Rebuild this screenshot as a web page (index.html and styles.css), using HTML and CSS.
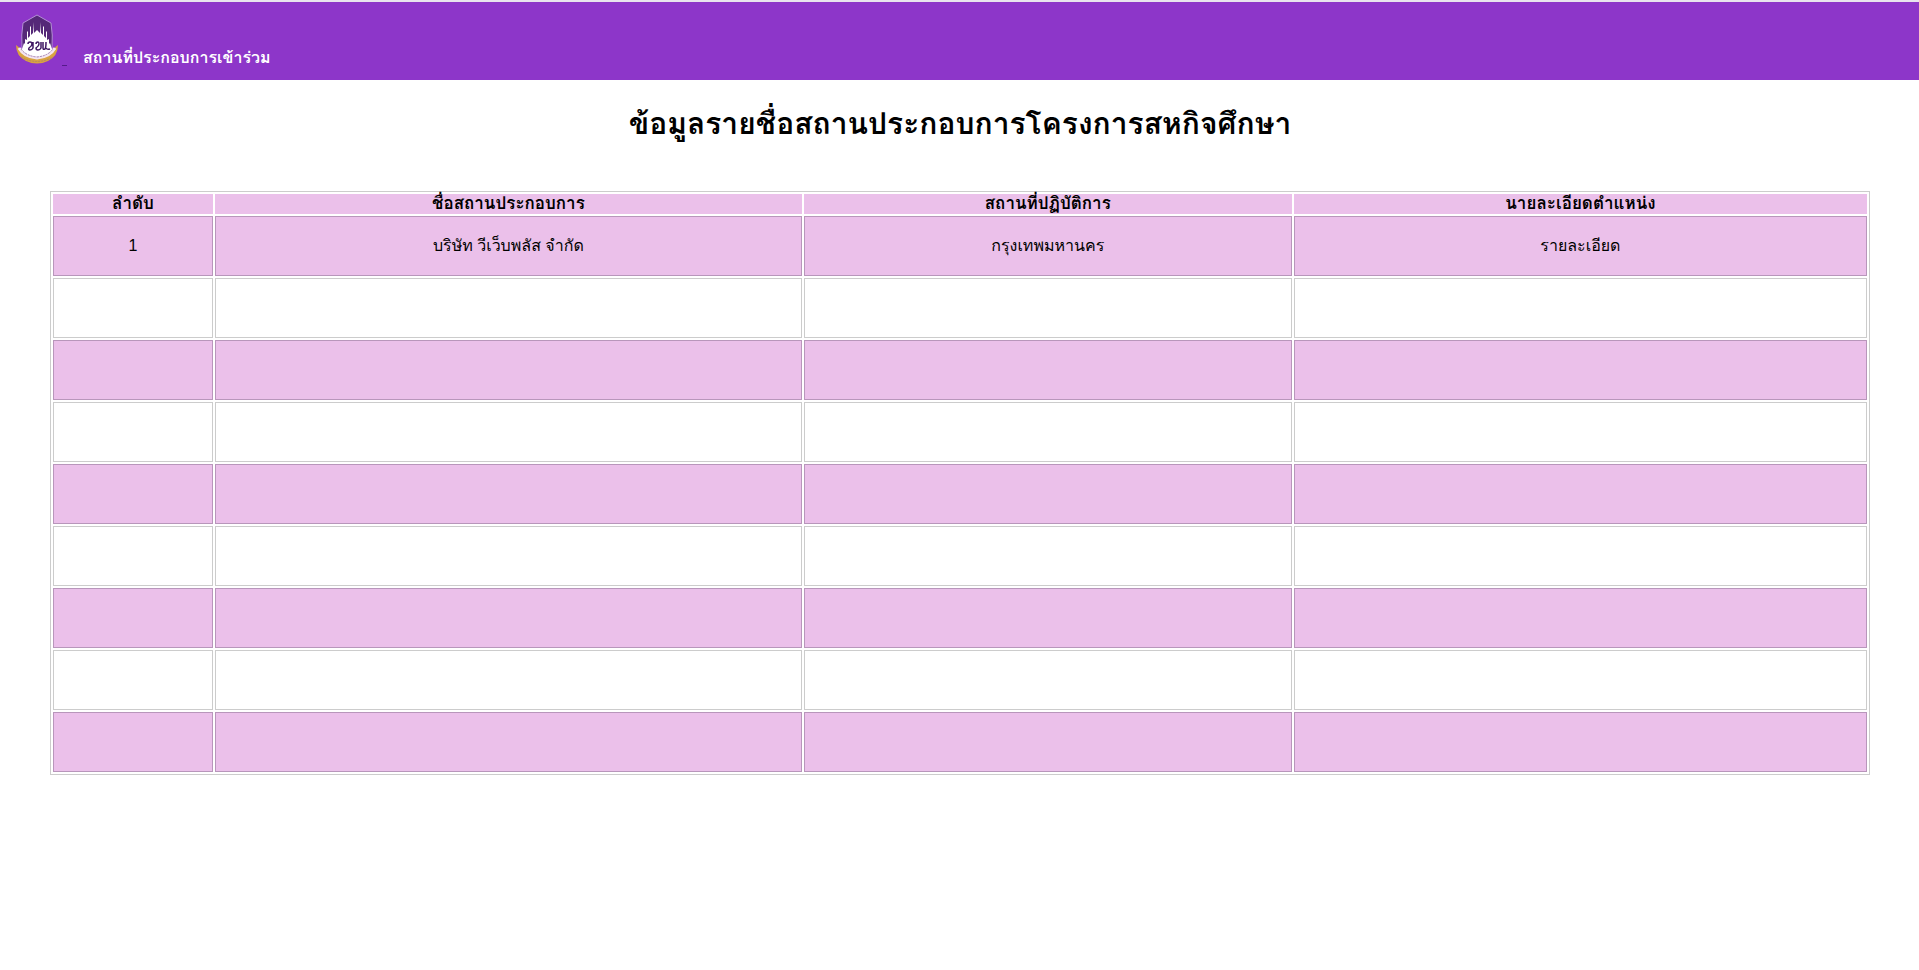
FILE: index.html
```html
<!DOCTYPE html>
<html lang="th">
<head>
<meta charset="utf-8">
<title>สถานที่ประกอบการเข้าร่วม</title>
<link rel="stylesheet" href="styles.css">
</head>
<body>
<header class="topbar">
  <a class="brand" href="#" aria-label="หน้าหลัก">
    <svg class="logo" viewBox="0 0 42 50" aria-hidden="true">
      <path d="M21 1 35 9Q37 20 36 35H6Q5 20 7 9Z" fill="#552878" stroke="#b48fd6"/>
      <path d="M6 35 8 29 9 30V25L11 26V18L12 17V24L14 22V13L15 12V21L17 19V8L18 19 21 16 24 19 25 8V19L27 21V12L28 13V22L30 24V17L31 18V26L33 25V30L34 29 36 35 39 37 31 45 21 47 11 45 3 37Z" fill="#fff"/>
      <path d="M0 31 5 35Q9 43 21 44 33 43 37 35L42 31Q42 42 32 47 21 52 10 47 0 42 0 31Z" fill="#d9a441"/>
      <path d="M3 34Q8 43 21 44 34 43 39 34" fill="none" stroke="#f5e6f0" stroke-width="3"/>
      <path d="M5 35Q10 42 21 43 32 42 37 35" fill="none" stroke="#a283b5" stroke-dasharray="2 1"/>
      <path d="M5 43Q21 52 37 43" fill="none" stroke="#b58a62" stroke-dasharray="2 1"/>
      <g fill="none" stroke="#3f1763" stroke-width="1.5">
        <path d="M12 30Q12 28 14 28 16 28 16 30 16 32 13 34 12 36 14 36 16 36 17 34V28"/>
        <path d="M20 30Q20 28 22 28 23 28 23 30 23 32 20 34 20 36 22 36 24 36 25 34V28"/>
        <path d="M27 28V34Q27 36 29 35 30 34 30 28M30 34Q31 36 34 35"/>
      </g>
    </svg>
    <span class="brand-line"></span>
  </a>
  <strong class="site-name">สถานที่ประกอบการเข้าร่วม</strong>
</header>
<main class="content">
  <h1 class="title">ข้อมูลรายชื่อสถานประกอบการโครงการสหกิจศึกษา</h1>
  <table class="places">
    <colgroup><col class="col-no"><col class="col-name"><col class="col-place"><col class="col-detail"></colgroup>
    <thead>
      <tr><th scope="col">ลำดับ</th><th scope="col">ชื่อสถานประกอบการ</th><th scope="col">สถานที่ปฏิบัติการ</th><th scope="col">นายละเอียดตำแหน่ง</th></tr>
    </thead>
    <tbody>
      <tr><td>1</td><td>บริษัท วีเว็บพลัส จำกัด</td><td>กรุงเทพมหานคร</td><td>รายละเอียด</td></tr>
      <tr><td></td><td></td><td></td><td></td></tr>
      <tr><td></td><td></td><td></td><td></td></tr>
      <tr><td></td><td></td><td></td><td></td></tr>
      <tr><td></td><td></td><td></td><td></td></tr>
      <tr><td></td><td></td><td></td><td></td></tr>
      <tr><td></td><td></td><td></td><td></td></tr>
      <tr><td></td><td></td><td></td><td></td></tr>
      <tr><td></td><td></td><td></td><td></td></tr>
    </tbody>
  </table>
</main>
</body>
</html>
```
FILE: styles.css
```css
* { box-sizing: border-box; }
body {
  margin: 0;
  border-top: 2px solid #e8e4ee;
  background: #fff;
  color: #000;
  font-family: "Liberation Sans", Loma, "Noto Sans Thai", sans-serif;
  font-size: 16px;
}
.topbar {
  display: flex;
  align-items: flex-end;
  gap: 16px;
  height: 78px;
  padding: 0 16px 12px;
  background: #8d36c9;
  color: #fff;
}
.brand { display: flex; align-items: flex-end; gap: 4px; }
.logo { width: 42px; height: 50px; margin-bottom: 4px; }
.brand-line { width: 5px; height: 1px; margin-bottom: 2px; background: #551a8b; }
.site-name { line-height: 20px; }
.content { padding: 24px 49px 24px 50px; }
.title {
  margin: 0 0 47px;
  font-size: 30px;
  line-height: 40px;
  text-align: center;
}
.places {
  width: 100%;
  table-layout: fixed;
  border: 1px solid #ccc;
  border-collapse: separate;
  border-spacing: 2px;
  text-align: center;
}
.places th { height: 20px; padding: 0; font-size: 17px; line-height: 20px; }
.places td { height: 60px; padding: 0; border: 1px solid #ccc; line-height: 20px; }
.places th, .places tbody tr:nth-child(odd) td { background: #ebc0ea; }
.places tbody tr:nth-child(odd) td { border-color: #b896bb; }
.col-no { width: 160px; }
.col-name { width: 32.45%; }
.col-place { width: 27%; }
```
